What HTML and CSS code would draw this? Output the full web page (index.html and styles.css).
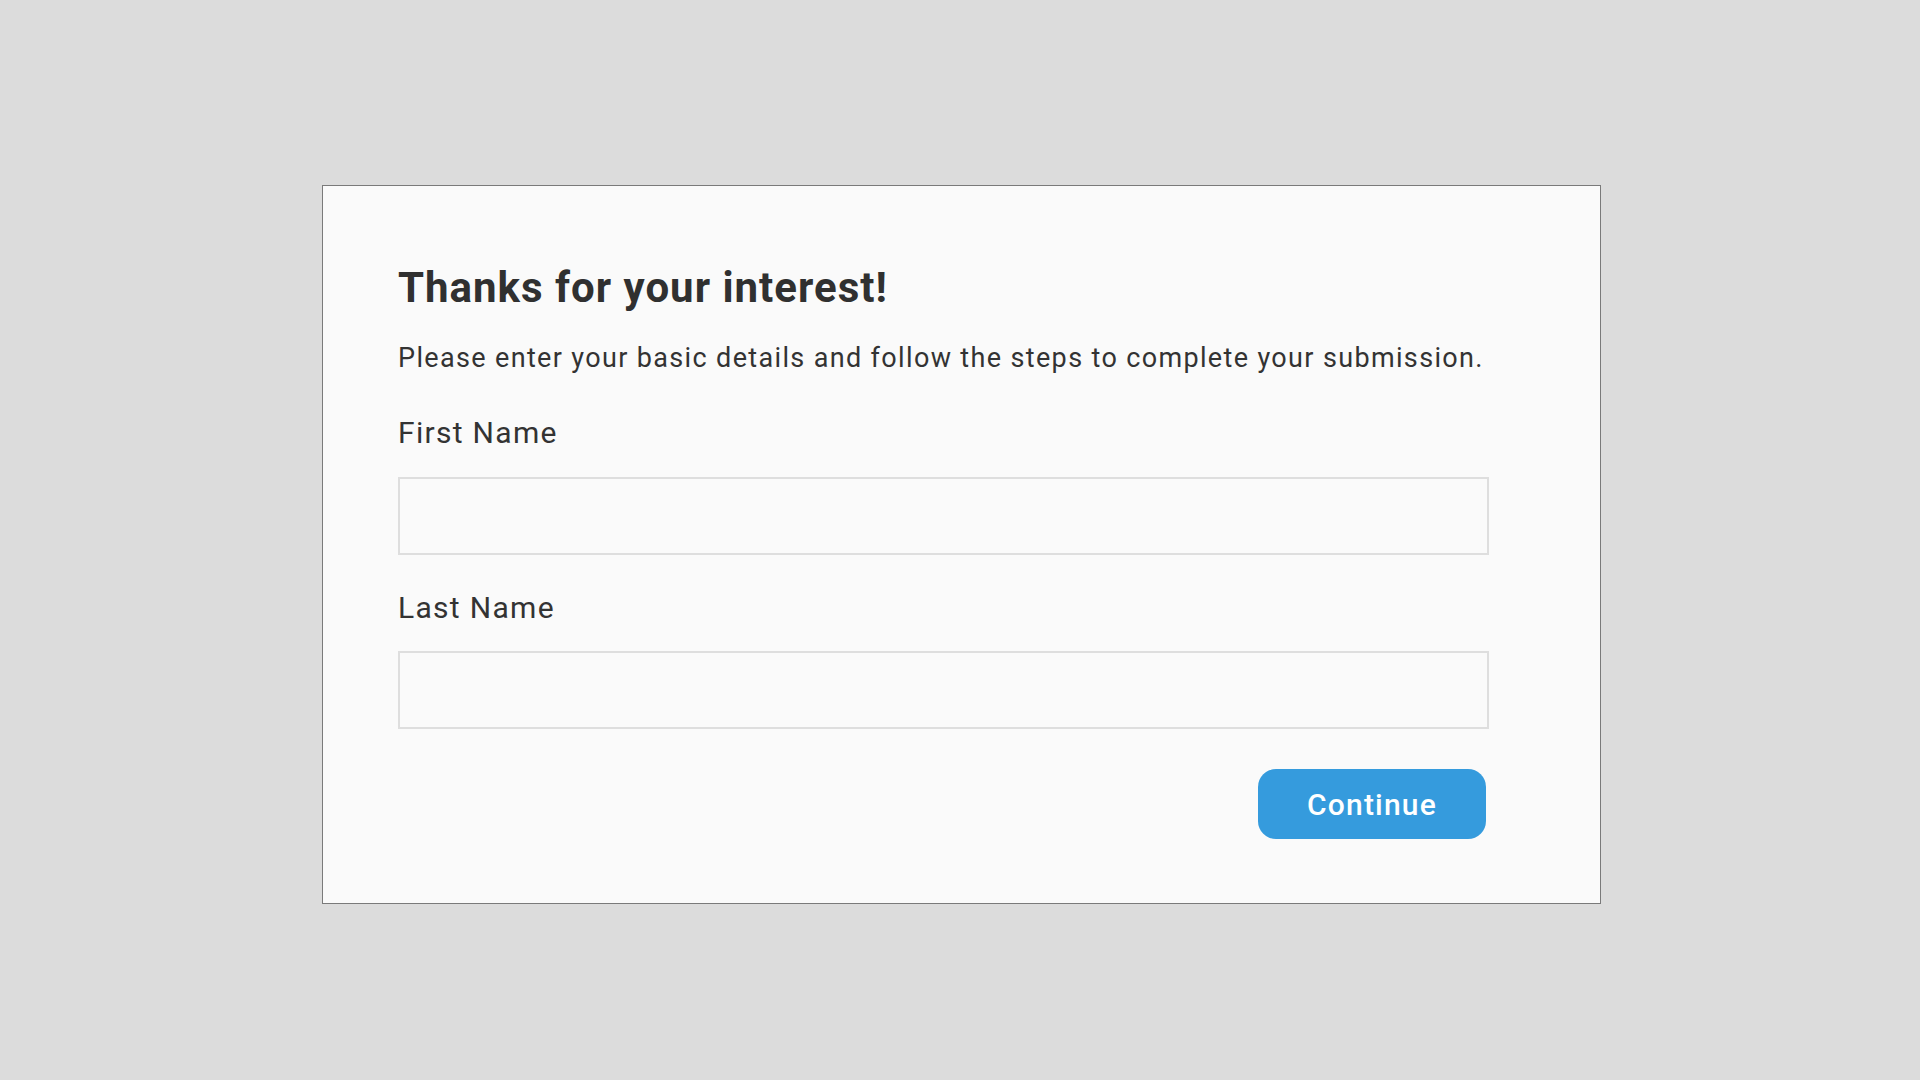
FILE: index.html
```html
<!DOCTYPE html>
<html lang="en">
<head>
<meta charset="utf-8">
<title>Thanks for your interest</title>
<link rel="stylesheet" href="styles.css">
</head>
<body>
  <main class="card">
    <h1 class="title">Thanks for your interest!</h1>
    <p class="intro">Please enter your basic details and follow the steps to complete your submission.</p>
    <form class="form">
      <div class="field">
        <label class="label" for="first">First Name</label>
        <input class="input" id="first" type="text">
      </div>
      <div class="field field-next">
        <label class="label" for="last">Last Name</label>
        <input class="input input-second" id="last" type="text">
      </div>
      <div class="actions">
        <button class="btn" type="button">Continue</button>
      </div>
    </form>
  </main>
</body>
</html>
```

FILE: styles.css
```css
* { box-sizing: border-box; }
html, body { margin: 0; height: 100%; }
body {
  background: #dcdcdc;
  font-family: Roboto, "Noto Sans", "Liberation Sans", sans-serif;
  color: #333333;
  padding: 185px 0 0 322px;
}
.card {
  width: 1279px;
  height: 719px;
  background: #fafafa;
  border: 1px solid #7a7a7a;
  padding: 77px 111px 64px 75px;
}
.title {
  margin: 0;
  font-size: 42px;
  line-height: 50px;
  font-weight: 700;
  letter-spacing: 1px;
  color: #303030;
}
.intro {
  margin: 29px 0 0;
  font-size: 27px;
  line-height: 32px;
  font-weight: 400;
  letter-spacing: 1.35px;
}
.form { margin-top: 41px; }
.field { display: flex; flex-direction: column; }
.field-next { margin-top: 35px; }
.label {
  font-size: 30px;
  line-height: 36px;
  font-weight: 400;
  letter-spacing: 1.3px;
}
.input {
  margin-top: 26px;
  height: 78px;
  width: 100%;
  border: 2px solid #dedede;
  background: #fafafa;
  outline: none;
  font: inherit;
}
.input-second { margin-top: 25px; }
.actions {
  display: flex;
  justify-content: flex-end;
  margin-top: 40px;
}
.btn {
  width: 228px;
  height: 70px;
  margin-right: 3px;
  border: none;
  border-radius: 18px;
  background: #359bdd;
  color: #ffffff;
  font-family: Roboto, "Noto Sans", "Liberation Sans", sans-serif;
  font-size: 30px;
  font-weight: 500;
  letter-spacing: 1.2px;
  cursor: pointer;
}
```
